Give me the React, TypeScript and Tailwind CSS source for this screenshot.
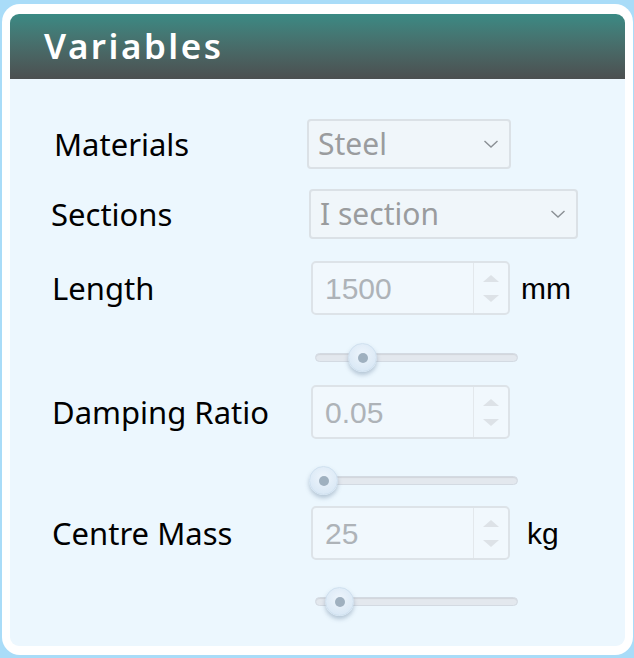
import React from 'react';

const labelFont = { fontFamily: '"Noto Sans", "Open Sans", sans-serif' };

const Chevron: React.FC = () => (
    <svg width="16" height="10" viewBox="0 0 16 10" className="shrink-0">
        <path d="M1.5 2 L8 8 L14.5 2" fill="none" stroke="#8a8f94" strokeWidth="1.4" />
    </svg>
);

const SelectBox: React.FC<{ value: string; width: string }> = ({ value, width }) => (
    <div className={`${width} h-[50px] flex items-center justify-between pl-[9px] pr-[10px] rounded-[4px] border-2 border-[#dbe1e6] bg-[#f0f6fa]`}>
        <span className="text-[30px] text-[#9a9c9e] leading-none" style={labelFont}>{value}</span>
        <Chevron />
    </div>
);

const NumberBox: React.FC<{ value: string }> = ({ value }) => (
    <div className="w-[199px] h-[54px] flex rounded-[5px] border-2 border-[#dde3e8] bg-[#f1f8fd]">
        <div className="flex-1 flex items-center pl-[12px] text-[30px] text-[#aeb3b8] font-['Liberation_Sans',Arial,sans-serif]">{value}</div>
        <div className="w-[35px] border-l border-[#e3e8ec] flex flex-col items-center justify-center gap-[13px]">
            <div className="w-0 h-0 border-l-[8px] border-r-[8px] border-b-[7px] border-l-transparent border-r-transparent border-b-[#dde2e7]" />
            <div className="w-0 h-0 border-l-[8px] border-r-[8px] border-t-[7px] border-l-transparent border-r-transparent border-t-[#dde2e7]" />
        </div>
    </div>
);

const Slider: React.FC<{ pos: number }> = ({ pos }) => (
    <div className="relative w-[203px] h-[28px] ml-[305px]">
        <div className="absolute left-0 right-0 top-[10px] h-[9px] rounded-full bg-[#e3e8ee] border border-[#d3dae2] shadow-[inset_0_1px_1px_rgba(0,0,0,0.08)]" />
        <div
            className="absolute top-0 w-[29px] h-[29px] rounded-full border border-[#cfe0ef] bg-[radial-gradient(circle_at_50%_40%,#eef5fc,#d3e4f3)] shadow-[0_3px_4px_rgba(80,110,140,0.35)] flex items-center justify-center"
            style={{ left: pos - 14 }}
        >
            <div className="w-[10px] h-[10px] rounded-full bg-[#9fb0bf]" />
        </div>
    </div>
);

const Label: React.FC<{ text: string; className?: string }> = ({ text, className }) => (
    <span className={`text-[31px] text-black leading-none ${className ?? ''}`} style={labelFont}>{text}</span>
);

const App: React.FC = () => {
    return (
        <div className="w-[634px] h-[658px] bg-[#a9dcf8] pt-[4px] pl-[2px] pr-[1px]">
            <div className="h-[651px] bg-white rounded-[18px] pt-[10px] pb-[9px] px-[8px] flex flex-col">
                <div className="h-[65px] rounded-t-[9px] bg-gradient-to-b from-[#3a8a84] to-[#4b4f50] flex items-center pl-[34px]">
                    <h2 className="text-[35px] font-semibold text-white tracking-[2.5px]" style={labelFont}>Variables</h2>
                </div>
                <div className="flex-1 bg-[#ecf7fe] rounded-b-[9px] pt-[40px]">
                    <div className="flex items-center h-[50px]">
                        <Label text="Materials" className="ml-[44px] w-[253px]" />
                        <SelectBox value="Steel" width="w-[204px]" />
                    </div>
                    <div className="flex items-center h-[50px] mt-[20px]">
                        <Label text="Sections" className="ml-[41px] w-[258px]" />
                        <SelectBox value="I section" width="w-[269px]" />
                    </div>
                    <div className="flex items-center h-[54px] mt-[22px]">
                        <Label text="Length" className="ml-[42px] w-[259px]" />
                        <NumberBox value="1500" />
                        <span className="ml-[11px] text-[30px] text-black font-['Liberation_Sans',Arial,sans-serif]">mm</span>
                    </div>
                    <div className="mt-[28px]"><Slider pos={47} /></div>
                    <div className="flex items-center h-[54px] mt-[14px]">
                        <Label text="Damping Ratio" className="ml-[42px] w-[259px]" />
                        <NumberBox value="0.05" />
                    </div>
                    <div className="mt-[27px]"><Slider pos={8} /></div>
                    <div className="flex items-center h-[54px] mt-[12px]">
                        <Label text="Centre Mass" className="ml-[42px] w-[259px]" />
                        <NumberBox value="25" />
                        <span className="ml-[17px] text-[30px] text-black font-['Liberation_Sans',Arial,sans-serif]">kg</span>
                    </div>
                    <div className="mt-[27px]"><Slider pos={24} /></div>
                </div>
            </div>
        </div>
    );
};

export default App;
